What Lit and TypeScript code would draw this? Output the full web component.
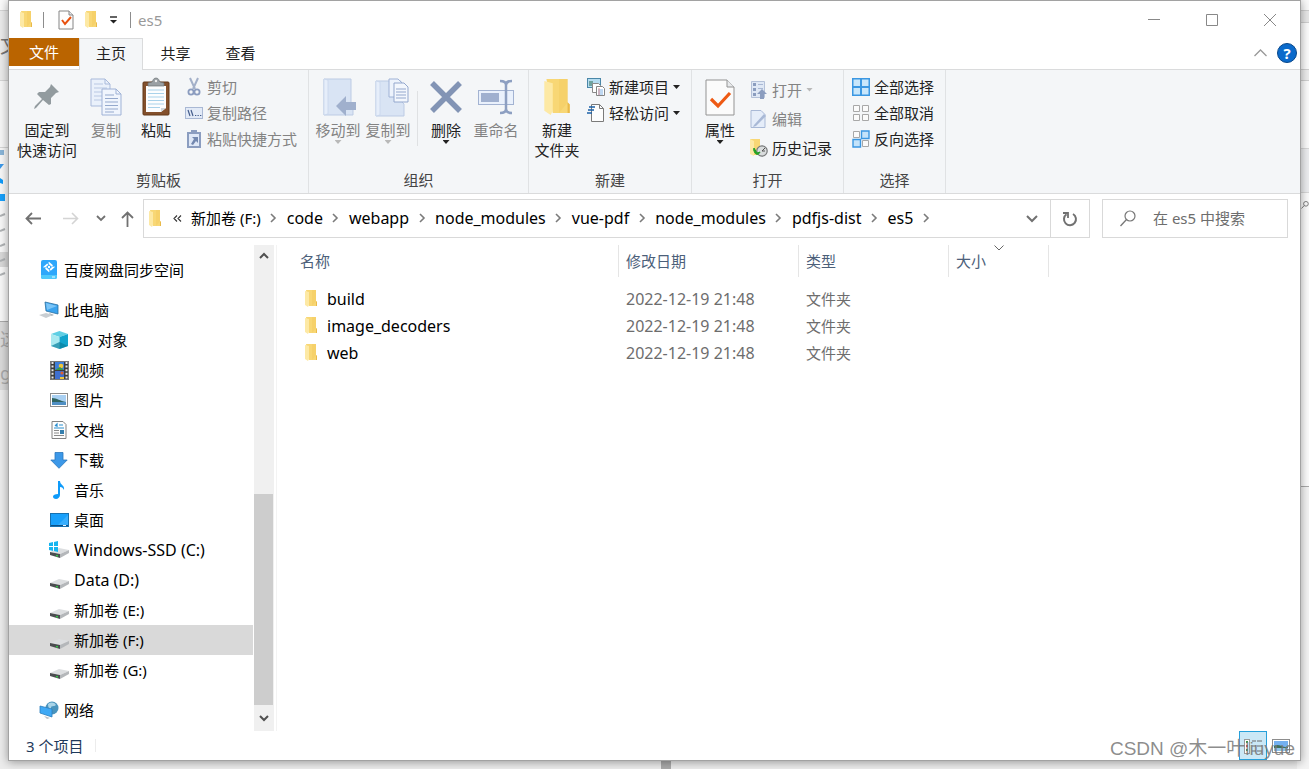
import { LitElement, html, svg, css, nothing } from "lit";
import { customElement } from "lit/decorators.js";
import { classMap } from "lit/directives/class-map.js";

const icon = (w: number, h: number, body: unknown, vb = `0 0 ${w} ${h}`) =>
  html`<svg class="ico" width=${w} height=${h} viewBox=${vb} aria-hidden="true">${body}</svg>`;

const folder = (w = 12, h = 17) =>
  icon(w, h, svg`
    <path d="M1 0h10v11l1 1v4H4z" fill="#f8d775"/>
    <path d="M7 0h4v11l-4 5z" fill="#f3cb5f" opacity=".5"/>
    <path d="M0 1l4 1v13l-1 2-3-2z" fill="#fde9a5"/>
    <path d="M11 11l1 1v4h-1z" fill="#e9b94a"/>`, "0 0 12 17");

const I = {
  docCheck: icon(16, 20, svg`
    <path d="M1 1h10l4 4v14H1z" fill="#fdfdfd" stroke="#858585"/>
    <path d="M11 1v4h4" fill="#e3e6ea" stroke="#858585"/>
    <path d="M4 10l3 4 6-7" fill="none" stroke="#e8500e" stroke-width="2"/>`),
  qatDrop: icon(9, 8, svg`<path d="M1 1h7" stroke="#222" stroke-width="1.4"/><path d="M1 4h7l-3.500 3.500z" fill="#222"/>`),
  min: icon(12, 12, svg`<path d="M0 5.500h12" stroke="#888"/>`),
  max: icon(12, 12, svg`<path d="M.5 .5h11v11H.5z" fill="none" stroke="#888"/>`),
  close: icon(12, 12, svg`<path d="M0 0l12 12M12 0L0 12" stroke="#888"/>`),
  collapse: icon(13, 8, svg`<path d="M.5 7l6-6 6 6" fill="none" stroke="#999" stroke-width="1.300"/>`),
  pin: icon(26, 28, svg`<path d="M17 1l8 8-3 1-5 5v6l-2 1-6-5-7 8-2 1 1-3 7-7-5-5 2-2h6l5-5z" fill="#929b9f"/>`),
  copy: icon(32, 38, svg`
    <path d="M1 1h14l5 5v22H1z" fill="#eaf1fb" stroke="#a9badb"/>
    <path d="M15 1v5h5" fill="none" stroke="#a9badb"/>
    <path d="M4 6h9M4 10h13M4 14h8M4 18h8M4 22h8" stroke="#b9c8e3"/>
    <path d="M12 11h14l5 5v21H12z" fill="#f0f5fd" stroke="#9fb2d6"/>
    <path d="M26 11v5h5" fill="none" stroke="#9fb2d6"/>
    <path d="M15 17h9M15 20.500h13M15 24h13M15 27.500h13M15 31h13M15 34h9" stroke="#95a9cd"/>`),
  paste: icon(28, 38, svg`
    <rect x="1" y="4" width="26" height="33" rx="1" fill="#83502c" stroke="#633819"/>
    <path d="M4 8h20v22l-5 4H4z" fill="#fcfdfe"/>
    <path d="M6 12h16M6 15.500h16M6 19h16M6 22.500h16M6 26h16M6 29.500h12" stroke="#a9d2ea"/>
    <path d="M24 30l-5 4v-4z" fill="#cfd6db"/>
    <path d="M6 8V5l4-1c1-1 1-4 4-4s3 3 4 4l4 1v3z" fill="#9aa0a4" stroke="#6f7477" stroke-width=".7"/>
    <circle cx="14" cy="3" r="1.200" fill="#eee"/>`),
  cut: icon(18, 18, svg`
    <path d="M5 0l5 11M13 0L8 11" stroke="#a3b0c9" stroke-width="2" fill="none"/>
    <circle cx="6" cy="14" r="2.600" fill="none" stroke="#8b9cbf" stroke-width="1.800"/>
    <circle cx="12" cy="14" r="2.600" fill="none" stroke="#8b9cbf" stroke-width="1.800"/>`),
  path: icon(18, 12, svg`
    <rect x=".5" y=".5" width="17" height="11" fill="#e2eaf7" stroke="#a9b8d4"/>
    <path d="M3 3l2 6M6 3l2 6" stroke="#445d8c" stroke-width="1.200"/><path d="M10 8.500h1.300M12.500 8.500h1.300M15 8.500h1.300" stroke="#445d8c"/>`),
  shortcut: icon(16, 18, svg`
    <rect x="1" y="2" width="14" height="16" fill="#8b9dc0"/><rect x="3" y="4" width="10" height="12" fill="#dfe8f7"/>
    <rect x="5" y="0" width="6" height="4" fill="#8b9dc0"/>
    <path d="M6 7h6v6l-2-2-3 4-2-1 3-5z" fill="#7388b0"/>`),
  moveTo: icon(36, 38, svg`
    <path d="M0 1h27v24l2 2v10H0z" fill="#d9e4f4" stroke="#bccbe4"/>
    <path d="M0 1l4 1v34l-4 1z" fill="#e6eefa" stroke="#c4d2ea" stroke-width=".7"/>
    <path d="M12 28l10-10v6h10v8H22v6z" fill="#a0b0cd"/>`, "-4 0 36 38"),
  copyTo: icon(42, 38, svg`
    <path d="M1 3h25v20l3 3v12H1z" fill="#d9e4f4" stroke="#bccbe4"/>
    <path d="M1 3l4 1v33l-4 1z" fill="#e6eefa" stroke="#c4d2ea" stroke-width=".7"/>
    <path d="M14 1h9l4 4v14H14z" fill="#edf3fc" stroke="#9fb2d6"/>
    <path d="M19 5h10l4 4v15H19z" fill="#f3f7fd" stroke="#93a7cd"/>
    <path d="M21 11h10M21 14h10M21 17h10M21 20h10" stroke="#93a7cd"/>`, "-8 0 42 38"),
  del: icon(32, 32, svg`<path d="M2 2l28 28M30 2L2 30" stroke="#8294b5" stroke-width="5.500"/>`),
  rename: icon(36, 34, svg`
    <rect x=".5" y="10.500" width="35" height="14" fill="#eaf1fc" stroke="#a3b3d2"/>
    <rect x="3" y="13" width="18" height="9" fill="#a0b0cf"/>
    <path d="M22 1c4 0 6 1 6 4v24c0 3-2 4-6 4M34 1c-4 0-6 1-6 4v24c0 3 2 4 6 4" fill="none" stroke="#8d9fc1" stroke-width="2.500"/>`),
  newItem: icon(18, 18, svg`
    <rect x=".5" y=".5" width="13" height="9" fill="#b5dcf0" stroke="#4a87a8"/><rect x="2" y="3" width="4" height="5" fill="#6fa3a0"/>
    <path d="M5.500 5.500h6l2 2v7h-8z" fill="#fff" stroke="#8a8a8a"/>
    <path d="M9.500 8.500h6l2 2v7h-8z" fill="#fff" stroke="#858585"/><path d="M11 12h5M11 14h5M11 16h5" stroke="#7fb0e4"/><path d="M12 10v7" stroke="#dd7b77" stroke-width=".8"/>`),
  easy: icon(18, 18, svg`
    <path d="M4.500 .5h8l4 4v13h-12z" fill="#fdfdfd" stroke="#7a7a7a"/><path d="M12.500 .5v4h4" fill="none" stroke="#7a7a7a"/>
    <path d="M2 3h6M1 6h6M0 9h5" stroke="#1b62a8" stroke-width="1.500"/>`),
  props: icon(30, 37, svg`
    <path d="M1 1h21l7 7v28H1z" fill="#fbfbfb" stroke="#939393"/>
    <path d="M22 1v7h7" fill="#e8eaec" stroke="#939393"/>
    <path d="M6 20l7 7 12-13" fill="none" stroke="#ee5a14" stroke-width="3.200"/>`),
  open: icon(18, 18, svg`
    <path d="M1.500 .5h13v16h-13z" fill="#dfe8f5" stroke="#b4c1d8"/>
    <path d="M3 2h3v3H3zM3 7h3v3H3zM3 12h3v3H3z" fill="#8b9dbf"/><path d="M8 3.500h5M8 7.500h5" stroke="#a9b8d4"/>
    <path d="M12 8l5 5h-3v5h-4v-5H7z" fill="#8b9dbf"/>`),
  edit: icon(18, 18, svg`
    <path d="M1 .5h10l4 4v13H1z" fill="#e5edf9" stroke="#a9b9d6"/><path d="M4 15L14 4l2 2L6 16l-3 1z" fill="#a9b9d6"/>`),
  history: icon(18, 18, svg`
    <path d="M0 0h10v16H3z" fill="#f8d775"/><path d="M0 0l4 2v15l-4-2z" fill="#fde9a5"/>
    <circle cx="12" cy="12" r="5.200" fill="#d9dcdd" stroke="#77797a" stroke-width="1.200"/><path d="M12 12l3-3M12 12h3" stroke="#555"/>
    <path d="M4 9l3 5 3-1c-1 3-4 3-5 1-1-2-2-3-1-5z" fill="#23a127" stroke="#23a127"/>`),
  all: icon(18, 18, svg`<rect x=".75" y=".75" width="16.500" height="16.500" fill="#c8e6fb" stroke="#3b97e2" stroke-width="1.500"/><path d="M9 0v18M0 9h18" stroke="#3b97e2" stroke-width="2"/>`),
  none: icon(18, 18, svg`<path d="M1.500 1.500h6v6h-6zM10.500 1.500h6v6h-6zM1.500 10.500h6v6h-6zM10.500 10.500h6v6h-6z" fill="#fbfbfb" stroke="#a8a8a8"/>`),
  invert: icon(18, 18, svg`<path d="M1.500 1.500h6v6h-6zM10.500 10.500h6v6h-6z" fill="#fbfbfb" stroke="#a8a8a8"/><path d="M9.500 1h7.500v7.500H9.500zM1 9.500h7.500V17H1z" fill="#c4e3fa" stroke="#3b97e2" stroke-width="1.400"/>`),
  back: icon(16, 13, svg`<path d="M16 6.500H2M7 1L1.500 6.500 7 12" fill="none" stroke="#717171" stroke-width="1.800"/>`),
  fwd: icon(16, 13, svg`<path d="M0 6.500h14M9 1l5.500 5.500L9 12" fill="none" stroke="#d4d4d4" stroke-width="1.600"/>`),
  up: icon(13, 16, svg`<path d="M6.500 16V2M1 7l5.500-5.500L12 7" fill="none" stroke="#717171" stroke-width="1.800"/>`),
  down: icon(10, 7, svg`<path d="M1 1l4 4 4-4" fill="none" stroke="#717171" stroke-width="1.800"/>`),
  downBig: icon(12, 8, svg`<path d="M1 1l5 5 5-5" fill="none" stroke="#717171" stroke-width="2"/>`),
  right: icon(7, 10, svg`<path d="M1 1l4 4-4 4" fill="none" stroke="#7b7b7b" stroke-width="1.600"/>`),
  refresh: icon(16, 16, svg`<path d="M11 3a6 6 0 1 1-6.500 .3" fill="none" stroke="#717171" stroke-width="2"/><path d="M1 2h5v5" fill="none" stroke="#717171" stroke-width="1.800"/>`),
  search: icon(16, 17, svg`<circle cx="10" cy="6" r="5" fill="none" stroke="#777" stroke-width="1.200"/><path d="M6.500 9.500L.5 16" stroke="#777" stroke-width="1.300"/>`),
  more: icon(9, 8, svg`<path d="M4 .5L1 3.500l3 3M8 .5L5 3.500l3 3" fill="none" stroke="#333" stroke-width="1.100"/>`),
  sbUp: icon(10, 7, svg`<path d="M1 6l4-4 4 4" fill="none" stroke="#505050" stroke-width="2"/>`),
  sbDown: icon(10, 7, svg`<path d="M1 1l4 4 4-4" fill="none" stroke="#505050" stroke-width="2"/>`),
  sort: icon(10, 6, svg`<path d="M.5 .5L5 5 9.500 .5" fill="none" stroke="#666"/>`),
  details: icon(20, 16, svg`
    <rect x="1.500" y="1.500" width="5" height="14" fill="#fff" stroke="#999"/><path d="M4 3v2M4 11v2" stroke="#3f9a46" stroke-width="2"/><path d="M4 7v2" stroke="#c43a2f" stroke-width="2"/>
    <path d="M9 3h4M14 3h5M9 8h4M14 8h5M9 13h4M14 13h5" stroke="#6b6b6b"/>`),
  thumbs: icon(18, 14, svg`
    <rect x=".5" y=".5" width="17" height="13" fill="#fff" stroke="#8d8d8d"/><rect x="2" y="2" width="14" height="10" fill="#74b0f0"/>
    <path d="M2 7c5-3 8 2 14 1v1H2z" fill="#3d6f5c"/><path d="M2 9h14v3H2z" fill="#8fc3ea"/>`),
};

const drive = svg`
  <path d="M0 10l9-4 10 2-9 4z" fill="#dcdee0"/><path d="M0 10l10 2v4L0 13z" fill="#4a4d4f"/><path d="M10 12l9-4v3l-9 5z" fill="#b4b7ba"/><path d="M6 13h2v1.500H6z" fill="#37c04a"/>`;

const T: Record<string, unknown> = {
  baidu: icon(18, 20, svg`
    <rect x="1" y="0" width="16" height="19" rx="2" fill="#2ea7fb"/><path d="M1 15h16v2a2 2 0 0 1-2 2H3a2 2 0 0 1-2-2z" fill="#4fc9fb"/><path d="M12 17h3" stroke="#eaf8ff"/>
    <path d="M9 3l4.500 4L9 11 4.500 7z" fill="none" stroke="#fff" stroke-width="1.800" stroke-dasharray="4.500 1.500"/><circle cx="9" cy="7" r="1.200" fill="#fff"/>`),
  pc: icon(20, 18, svg`
    <path d="M6 1l13 3v9L7 10z" fill="#3ba3ee" stroke="#2a6f9f" stroke-width=".8"/><path d="M7 2l11 3-10 4z" fill="#7cc5f7"/>
    <path d="M10 12l5 2-3 1z" fill="#9aa2a8"/><path d="M0 14l7-2 7 2-7 3z" fill="#c9ced2"/>`),
  cube: icon(19, 18, svg`
    <path d="M9.500 0L18 3 9.500 6 1 3z" fill="#5fcfe4"/><path d="M1 3l8.500 3v12L1 15z" fill="#a8e9f0"/><path d="M18 3L9.500 6v12l8.500-3z" fill="#12a5cd"/><path d="M1 15l8.500-4 8.500 4-8.500 3z" fill="#087f9d" opacity=".7"/>`),
  video: icon(19, 19, svg`
    <rect x=".5" y=".5" width="18" height="18" fill="#3d3d3d" stroke="#777"/>
    <path d="M2.500 1v17M16.500 1v17" stroke="#e8e8e8" stroke-width="2" stroke-dasharray="2 1.600"/>
    <rect x="5" y="1" width="9" height="8" fill="#3f7fd9"/><rect x="5" y="10" width="9" height="8" fill="#3f6fd0"/>
    <circle cx="11" cy="5" r="2.300" fill="#f0c63a"/><path d="M5 9l5-3 4 3z" fill="#3a9a4c"/><circle cx="12" cy="12" r="1.600" fill="#e0602c"/><path d="M10 16h4v2h-4z" fill="#f0c63a"/>`),
  pic: icon(18, 14, svg`
    <rect x=".5" y=".5" width="17" height="13" fill="#fff" stroke="#8d8d8d"/><rect x="2" y="2" width="14" height="10" fill="#a9d0f2"/>
    <path d="M2 5c5 0 8 3 14 4v1H2z" fill="#2f6460"/><path d="M2 9h14v3H2z" fill="#4f8fc4"/>`),
  doc: icon(16, 18, svg`
    <path d="M1 .5h11l3 3v14H1z" fill="#fdfdfd" stroke="#828282"/>
    <path d="M4 5l2-2v3M8 4h4M3 7h10" stroke="#2b8fd0" fill="none" stroke-width="1.200"/><path d="M3 9.500h5M3 12h5M3 14.500h10" stroke="#8b8b8b"/><rect x="9" y="9" width="4" height="4" fill="#357fae"/>`),
  down: icon(18, 17, svg`<path d="M5 .5h8v7.500h4.200L9 16.300.8 8H5z" fill="#3c98e8" stroke="#2976bd" stroke-width=".8"/>`),
  music: icon(18, 18, svg`<path d="M8 0h2c0 4 5 4 4 9-1-2-2-3-4-3v8c0 2-2 4-4 4s-3-1-3-2.500S5 13 8 13z" fill="#0f9bfa"/>`),
  desk: icon(19, 14, svg`<rect x=".5" y=".5" width="18" height="13" fill="#18a0fb" stroke="#1671b0"/><path d="M8 12L18 2v10z" fill="#38aefd"/><path d="M1 12.500h17" stroke="#0b4f85"/><path d="M13 12.500h3" stroke="#e8f4fd"/>`),
  win: icon(20, 18, svg`<g transform="translate(1 1)">${drive}</g><path d="M0 2l4-1v4H0zM5 1l4-1v5H5zM0 6h4v4l-4-1zM5 6h4v5l-4-1z" fill="#16b5f0"/>`),
  drive: icon(19, 14, drive),
  net: icon(19, 18, svg`
    <circle cx="12" cy="7" r="6.500" fill="#4a94bd"/><path d="M8 3c3-2 6-2 8 1-2 2-5 0-5 3s-3 1-3-4z" fill="#a9d4e8"/>
    <path d="M0 5l12 3v8L0 12z" fill="#3fa9f5" stroke="#2c7fbe" stroke-width=".8"/><path d="M4 15l6 2-3 1z" fill="#b9bec2"/>`),
};

interface Node { k: string; t: string; root?: boolean; gap?: boolean; sel?: boolean }
const NODES: Node[] = [
  { k: "baidu", t: "百度网盘同步空间", root: true },
  { k: "pc", t: "此电脑", root: true, gap: true },
  { k: "cube", t: "3D 对象" },
  { k: "video", t: "视频" },
  { k: "pic", t: "图片" },
  { k: "doc", t: "文档" },
  { k: "down", t: "下载" },
  { k: "music", t: "音乐" },
  { k: "desk", t: "桌面" },
  { k: "win", t: "Windows-SSD (C:)" },
  { k: "drive", t: "Data (D:)" },
  { k: "drive", t: "新加卷 (E:)" },
  { k: "drive", t: "新加卷 (F:)", sel: true },
  { k: "drive", t: "新加卷 (G:)" },
  { k: "net", t: "网络", root: true, gap: true },
];
const CRUMBS = ["新加卷 (F:)", "code", "webapp", "node_modules", "vue-pdf", "node_modules", "pdfjs-dist", "es5"];
const FILES = ["build", "image_decoders", "web"];

/* Latin-only labels are set one size larger than the Chinese ones. */
const isLatin = (s: string) => /^[\x20-\x7e]+$/.test(s);

const base = css`
  * { box-sizing: border-box; }
  button { font: inherit; color: inherit; background: none; border: 0; padding: 0; margin: 0; }
  .ico { display: block; flex: none; overflow: visible; }
  .latin { font-size: 16px; }
`;

@customElement("ribbon-bar")
class RibbonBar extends LitElement {
  static styles = [base, css`
    :host { display: flex; background: #f4f6f8; border-top: 1px solid #dadbdc; border-bottom: 1px solid #dadbdc; color: #222; }
    .group { display: flex; flex-direction: column; border-right: 1px solid #e0e2e4; padding-top: 4px; }
    .clip { width: 300px; }
    .org { width: 220px; }
    .new { width: 163px; }
    .opn { width: 152px; }
    .sel { width: 102px; }
    .items { display: flex; height: 96px; padding-left: 4px; }
    .new .items, .opn .items { padding-left: 3px; }
    .sel .items { padding-left: 8px; }
    .name { line-height: 20px; height: 23px; text-align: center; color: #444; margin: 0; }
    .big { display: flex; flex-direction: column; align-items: center; width: 50px; line-height: 20px; white-space: nowrap; }
    .big .pic { display: flex; height: 46px; align-items: center; justify-content: center; }
    .wide { width: 68px; }
    .off { color: #838383; }
    .arrow { flex: none; width: 7px; height: 4px; background: currentColor; clip-path: polygon(0 0, 100% 0, 50% 100%); }
    .off .arrow { color: #b9b9b9; }
    .col { display: flex; flex-direction: column; margin-left: 5px; }
    .clip .col { margin-left: 4px; }
    .sel .col { margin-left: 0; }
    .tall { padding-top: 1px; }
    .small { display: flex; align-items: center; height: 26px; gap: 4px; white-space: nowrap; }
    .tall .small { height: 29px; }
    .small .pic { width: 18px; display: flex; justify-content: center; }
    .sep { width: 1px; height: 55px; background: #dfe1e3; margin: 17px 3px 0 4px; }
  `];
  big(pic: unknown, lines: string[], o: { off?: boolean; arrow?: boolean; wide?: boolean } = {}) {
    return html`<button class=${classMap({ big: true, off: !!o.off, wide: !!o.wide })} ?disabled=${o.off}>
      <span class="pic">${pic}</span>${lines.map((l) => html`<span>${l}</span>`)}
      ${o.arrow ? html`<span class="arrow"></span>` : nothing}</button>`;
  }
  small(pic: unknown, label: string, off = false, arrow = false) {
    return html`<button class=${classMap({ small: true, off })} ?disabled=${off}>
      <span class="pic">${pic}</span><span>${label}</span>${arrow ? html`<span class="arrow"></span>` : nothing}</button>`;
  }
  group(cls: string, name: string, body: unknown) {
    return html`<section class="group ${cls}" aria-label=${name}><div class="items">${body}</div><p class="name">${name}</p></section>`;
  }
  render() {
    return html`
      ${this.group("clip", "剪贴板", html`
        ${this.big(I.pin, ["固定到", "快速访问"], { wide: true })}
        ${this.big(I.copy, ["复制"], { off: true })}
        ${this.big(I.paste, ["粘贴"])}
        <div class="col">
          ${this.small(I.cut, "剪切", true)}${this.small(I.path, "复制路径", true)}${this.small(I.shortcut, "粘贴快捷方式", true)}
        </div>`)}
      ${this.group("org", "组织", html`
        ${this.big(I.moveTo, ["移动到"], { off: true, arrow: true })}
        ${this.big(I.copyTo, ["复制到"], { off: true, arrow: true })}
        <span class="sep"></span>
        ${this.big(I.del, ["删除"], { arrow: true })}
        ${this.big(I.rename, ["重命名"], { off: true })}`)}
      ${this.group("new", "新建", html`
        ${this.big(folder(26, 36), ["新建", "文件夹"])}
        <div class="col">${this.small(I.newItem, "新建项目", false, true)}${this.small(I.easy, "轻松访问", false, true)}</div>`)}
      ${this.group("opn", "打开", html`
        ${this.big(I.props, ["属性"], { arrow: true })}
        <div class="col tall">${this.small(I.open, "打开", true, true)}${this.small(I.edit, "编辑", true)}${this.small(I.history, "历史记录")}</div>`)}
      ${this.group("sel", "选择", html`
        <div class="col">${this.small(I.all, "全部选择")}${this.small(I.none, "全部取消")}${this.small(I.invert, "反向选择")}</div>`)}
    `;
  }
}

@customElement("nav-pane")
class NavPane extends LitElement {
  static styles = [base, css`
    :host { display: flex; width: 268px; border-right: 1px solid #f3f3f3; }
    .tree { flex: 1; list-style: none; margin: 0; padding: 10px 0 0; color: #000; }
    .row { display: flex; align-items: center; height: 30px; width: 100%; padding-left: 40px; gap: 5px; text-align: left; white-space: nowrap; }
    .root { padding-left: 30px; }
    .gap { margin-top: 10px; }
    .sel { background: #d9d9d9; }
    .pic { display: flex; justify-content: center; width: 20px; }
    .bar { width: 20px; margin: 0 2px 0 1px; background: #f0f0f0; display: flex; flex-direction: column; }
    .bar button { height: 20px; display: flex; align-items: center; justify-content: center; }
    .bar .bottom { height: 26px; }
    .track { flex: 1; display: flex; flex-direction: column; justify-content: flex-end; }
    .thumb { height: 48%; background: #cdcdcd; margin-right: 1px; }
  `];
  render() {
    return html`
      <ul class="tree">${NODES.map((n) => html`<li class=${classMap({ gap: !!n.gap })}>
        <button class=${classMap({ row: true, root: !!n.root, sel: !!n.sel, latin: isLatin(n.t) })}><span class="pic">${T[n.k]}</span><span>${n.t}</span></button></li>`)}</ul>
      <div class="bar">
        <button aria-label="向上滚动">${I.sbUp}</button>
        <div class="track"><div class="thumb"></div></div>
        <button class="bottom" aria-label="向下滚动">${I.sbDown}</button>
      </div>`;
  }
}

@customElement("file-list")
class FileList extends LitElement {
  static styles = [base, css`
    :host { display: block; flex: 1; }
    table { border-collapse: separate; border-spacing: 0; table-layout: fixed; width: 772px; }
    th { position: relative; height: 32px; font-weight: 400; text-align: left; color: #4c607a; border-right: 1px solid #e5e5e5; padding: 0 7px; }
    tbody::before { content: ""; display: block; height: 8px; }
    td { height: 27px; padding: 0 7px; color: #6d6d6d; white-space: nowrap; }
    .name { width: 342px; padding-left: 23px; }
    .date { width: 180px; }
    .type { width: 150px; }
    .size { width: 100px; }
    .file { display: flex; align-items: center; gap: 10px; padding-left: 5px; color: #000; }
    .sort { position: absolute; top: 0; left: 45px; }
  `];
  render() {
    return html`<table>
      <thead><tr><th class="name">名称</th><th class="date">修改日期</th><th class="type">类型</th><th class="size">大小<span class="sort">${I.sort}</span></th></tr></thead>
      <tbody>${FILES.map((f) => html`<tr><td class="name"><span class="file latin">${folder()}<span>${f}</span></span></td><td class="latin">2022-12-19 21:48</td><td>文件夹</td><td></td></tr>`)}</tbody>
    </table>`;
  }
}

@customElement("app-root")
class AppRoot extends LitElement {
  static styles = [base, css`
    :host { display: flex; box-sizing: border-box; position: relative; min-height: 100vh; padding: 0 8px 8px; overflow: hidden; background: #ececec;
      font: 15px/20px "Noto Sans", "Noto Sans CJK SC", sans-serif; color: #222; }
    .behind { position: absolute; top: 0; bottom: 0; width: 12px; display: flex; flex-direction: column; white-space: nowrap; }
    .left { left: 0; }
    .right { right: 0; }
    .b0 { height: 10px; background: #fafafa; }
    .b1 { height: 71px; background: #ebebeb; border: solid #d5d5d5; border-width: 1px 0; padding-top: 20px; font-size: 20px; line-height: 30px; color: #777; }
    .b2 { height: 67px; background: #f7f7f7; border-bottom: 1px solid #d5d5d5; }
    .b3 { height: 174px; background: #f8f8f8; border-bottom: 1px solid #aaa; }
    .b4 { height: 68px; background: #dadada; color: #aaa; font-size: 18px; line-height: 34px; }
    .b5 { flex: 1; background: #ececec; }
    .r0 { height: 13px; background: #e8e8e8; border: solid #cfcfcf; border-width: 1px 0; }
    .r1 { height: 46px; background: #fcfcfc; }
    .r2 { height: 12px; background: #eee; border: solid #d0d0d0; border-width: 1px 0; }
    .r3 { height: 67px; background: #fcfcfc; }
    .r4 { height: 45px; background: #edeef0; border: solid #d8d8d8; border-width: 1px 0; }
    .r5 { height: 294px; background: #fcfcfc; border-bottom: 1px solid #aaa; padding: 8px 0 0 4px; }
    .r6 { flex: 1; background: #f4f4f4; }
    .foot { position: absolute; bottom: 0; left: 661px; width: 10px; height: 8px; background: #aaa; }
    .win { position: relative; flex: 1; min-width: 0; display: flex; flex-direction: column; background: #fff; border: 1px solid #a2a2a2; box-shadow: 0 1px 9px rgba(0, 0, 0, .38); }
    .title { display: flex; align-items: center; height: 37px; padding-left: 11px; }
    .title h1 { font-size: 15px; font-weight: 400; color: #999; margin: 0 auto 0 7px; }
    .vr { width: 1px; height: 16px; background: #8d8d8d; }
    .q1 { margin: 0 14px 0 11px; }
    .q2 { margin: 0 12px 0 11px; }
    .q3 { margin-left: 12px; }
    .wb { width: 58px; height: 37px; display: flex; align-items: center; justify-content: center; }
    .wb:last-child { margin-right: 1px; }
    .tabs { display: flex; height: 32px; margin-bottom: -1px; position: relative; }
    .tab { width: 65px; height: 30px; }
    .filetab { width: 70px; height: 28px; background: #ba6400; color: #fff; }
    .active { width: 64px; height: 32px; background: #f4f6f8; border: 1px solid #dadbdc; border-bottom: 0; padding-bottom: 3px; }
    .tools { margin-left: auto; display: flex; align-items: center; gap: 10px; padding-right: 3px; height: 30px; }
    .help { width: 20px; height: 20px; border-radius: 50%; background: #0b6acb; border: 1px solid #08478a; color: #fff; font-weight: 700; line-height: 18px; }
    .addr { display: flex; align-items: center; padding: 5px 12px 5px 5px; height: 49px; }
    .nav { display: flex; align-items: center; justify-content: center; width: 38px; height: 38px; }
    .hist { width: 22px; }
    .up { width: 30px; }
    .box { flex: 1; display: flex; align-items: center; height: 39px; margin-left: 1px; border: 1px solid #d9d9d9; padding-left: 5px; color: #000; white-space: nowrap; min-width: 0; }
    .more { width: 30px; padding-left: 12px; }
    .crumbs { display: flex; list-style: none; margin: 0 auto 0 0; padding: 0 0 2px; }
    .crumbs li { display: flex; align-items: center; }
    .next { width: 26px; display: flex; justify-content: center; }
    .drop { width: 36px; height: 37px; display: flex; align-items: center; justify-content: center; }
    .refresh { width: 39px; height: 37px; display: flex; align-items: center; justify-content: center; border-left: 1px solid #d9d9d9; }
    .search { display: flex; align-items: center; width: 186px; height: 39px; margin-left: 12px; border: 1px solid #d9d9d9; padding: 0 0 1px 17px; gap: 17px; }
    .search input { font: inherit; border: 0; padding: 0; outline: 0; min-width: 0; flex: 1; background: none; }
    .search input::placeholder { color: #6d6d6d; opacity: 1; }
    .body { display: flex; flex: 1; padding-top: 2px; }
    .status { display: flex; align-items: center; height: 29px; padding: 0 5px 0 17px; color: #1e395b; }
    .status .tick { width: 1px; height: 13px; background: #ececec; margin: 0 auto 0 12px; }
    .view { width: 28px; height: 29px; display: flex; align-items: center; justify-content: center; }
    .on { background: #cbe8f6; border: 1px solid #26a0da; }
    .mark { position: absolute; right: 5px; bottom: 0; margin: 0; font: 19px/22px "Liberation Sans", "Noto Sans CJK SC", sans-serif; color: rgba(120, 120, 120, .85); pointer-events: none; white-space: nowrap; }
  `];
  render() {
    return html`
      <div class="behind left" aria-hidden="true"><div class="b0"></div><div class="b1">文</div><div class="b2"></div>
        <div class="b3">
          <svg class="ico" width="8" height="140" viewBox="0 0 8 140"><path d="M0 2h4v5H0z" fill="#8ab5d8"/><path d="M0 16h4l-4 5z" fill="#3c98e8"/><path d="M0 30l3 2v4l-3-1z" fill="#0f9bfa"/><path d="M0 46h5v7H0z" fill="#18a0fb"/>
          <path d="M0 104h8v15H0z" fill="#d9d9d9"/><path d="M0 68l5-2M0 83l5-2M0 98l5-2M0 113l5-2M0 127l5-2" stroke="#b0b3b5" stroke-width="2"/></svg>
        </div><div class="b4">这<br />g.</div><div class="b5"></div></div>
      <div class="behind right" aria-hidden="true"><div class="b0"></div><div class="r0"></div><div class="r1"></div><div class="r2"></div><div class="r3"></div><div class="r4"></div>
        <div class="r5"><svg class="ico" width="8" height="8" viewBox="0 0 16 17"><circle cx="10" cy="6" r="5" fill="none" stroke="#777" stroke-width="2"/><path d="M6.500 9.500L.5 16" stroke="#777" stroke-width="2"/></svg></div><div class="r6"></div></div>
      <span class="foot"></span>
      <div class="win">
        <header class="title">
          ${folder()}<span class="vr q1"></span>
          <button aria-label="属性">${I.docCheck}</button>
          <button class="q2" aria-label="新建文件夹">${folder()}</button>
          <button aria-label="自定义快速访问工具栏">${I.qatDrop}</button>
          <span class="vr q3"></span>
          <h1>es5</h1>
          <button class="wb" aria-label="最小化">${I.min}</button>
          <button class="wb" aria-label="最大化">${I.max}</button>
          <button class="wb" aria-label="关闭">${I.close}</button>
        </header>
        <nav class="tabs">
          <button class="tab filetab">文件</button><button class="tab active">主页</button><button class="tab">共享</button><button class="tab">查看</button>
          <div class="tools"><button aria-label="最小化功能区">${I.collapse}</button><button class="help">?</button></div>
        </nav>
        <ribbon-bar></ribbon-bar>
        <div class="addr">
          <button class="nav" aria-label="返回">${I.back}</button><button class="nav" aria-label="前进">${I.fwd}</button>
          <button class="nav hist" aria-label="最近位置">${I.down}</button><button class="nav up" aria-label="向上">${I.up}</button>
          <div class="box">${folder()}<button class="more" aria-label="更多">${I.more}</button>
            <ol class="crumbs">${CRUMBS.map((c) => html`<li><button class=${classMap({ latin: isLatin(c) })}>${c}</button><span class="next">${I.right}</span></li>`)}</ol>
            <button class="drop" aria-label="以前的位置">${I.downBig}</button>
            <button class="refresh" aria-label="刷新">${I.refresh}</button>
          </div>
          <label class="search">${I.search}<input type="text" placeholder="在 es5 中搜索" aria-label="搜索" /></label>
        </div>
        <main class="body"><nav-pane></nav-pane><file-list></file-list></main>
        <footer class="status"><span>3 个项目</span><span class="tick"></span>
          <button class="view on" aria-label="详细信息">${I.details}</button><button class="view" aria-label="大缩略图">${I.thumbs}</button></footer>
        <p class="mark">CSDN @木一叶liuyue</p>
      </div>`;
  }
}
